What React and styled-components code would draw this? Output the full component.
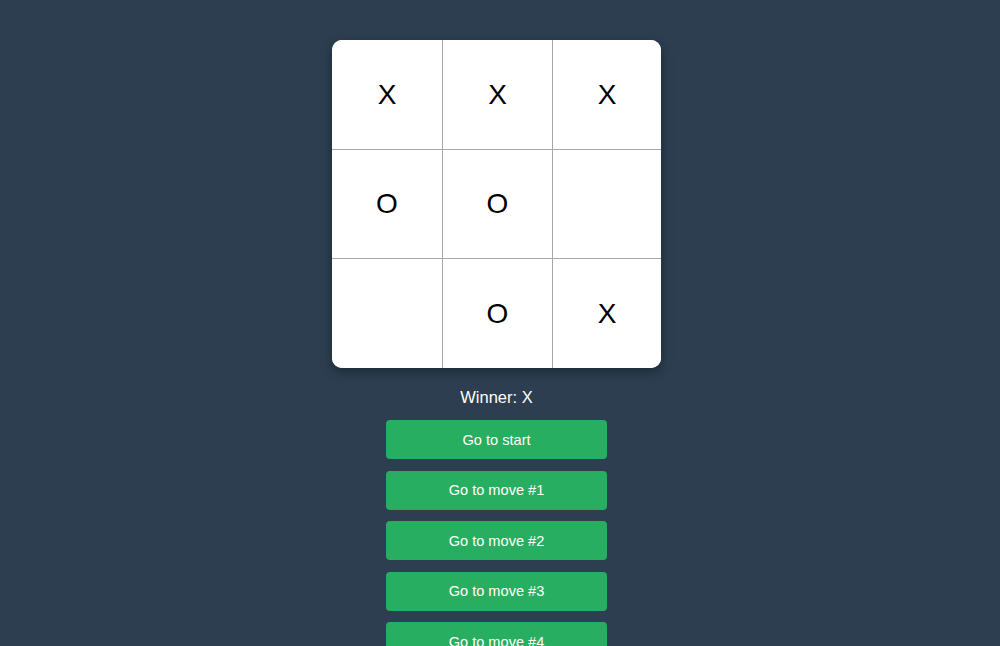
import React from "react";
import styled, { createGlobalStyle } from "styled-components";

const GlobalStyle = createGlobalStyle`
  body {
    margin: 0;
    background: #2c3e50;
    font-family: "Liberation Sans", Arial, sans-serif;
  }
`;

const Page = styled.div`
  display: flex;
  flex-direction: column;
  align-items: center;
  padding: 40px 7px 0 0;
  min-height: 646px;
  box-sizing: border-box;
`;

const Board = styled.div`
  display: grid;
  grid-template-columns: 111px 110px 108px;
  grid-template-rows: 110px 109px 109px;
  width: 329px;
  background: #fff;
  border-radius: 10px;
  overflow: hidden;
  box-shadow: 0 4px 12px rgba(0, 0, 0, 0.35);
`;

const Cell = styled.button`
  display: flex;
  align-items: center;
  justify-content: center;
  border: none;
  border-right: ${({ $lastCol }) => ($lastCol ? "none" : "1px solid #a8a8a8")};
  border-bottom: ${({ $lastRow }) => ($lastRow ? "none" : "1px solid #a8a8a8")};
  background: #fff;
  padding: 0;
  font-family: "Liberation Sans", Arial, sans-serif;
  font-size: 28px;
  color: #000;
  cursor: pointer;
`;

const Status = styled.div`
  margin-top: 20px;
  color: #fff;
  font-size: 16.5px;
  line-height: 19px;
`;

const Moves = styled.ol`
  list-style: none;
  margin: 13px 0 0;
  padding: 0;
  display: flex;
  flex-direction: column;
  gap: 11.5px;
`;

const MoveButton = styled.button`
  width: 221px;
  height: 39px;
  border: none;
  border-radius: 4px;
  background: #27ae60;
  color: #fff;
  font-family: "Liberation Sans", Arial, sans-serif;
  font-size: 14.6px;
  cursor: pointer;
`;

const squares = ["X", "X", "X", "O", "O", "", "", "O", "X"];
const moves = ["Go to start", "Go to move #1", "Go to move #2", "Go to move #3", "Go to move #4", "Go to move #5"];

export default function App() {
  return (
    <>
      <GlobalStyle />
      <Page>
        <Board>
          {squares.map((s, i) => (
            <Cell key={i} $lastCol={i % 3 === 2} $lastRow={i >= 6}>
              {s}
            </Cell>
          ))}
        </Board>
        <Status>Winner: X</Status>
        <Moves>
          {moves.map((m) => (
            <li key={m}>
              <MoveButton>{m}</MoveButton>
            </li>
          ))}
        </Moves>
      </Page>
    </>
  );
}
